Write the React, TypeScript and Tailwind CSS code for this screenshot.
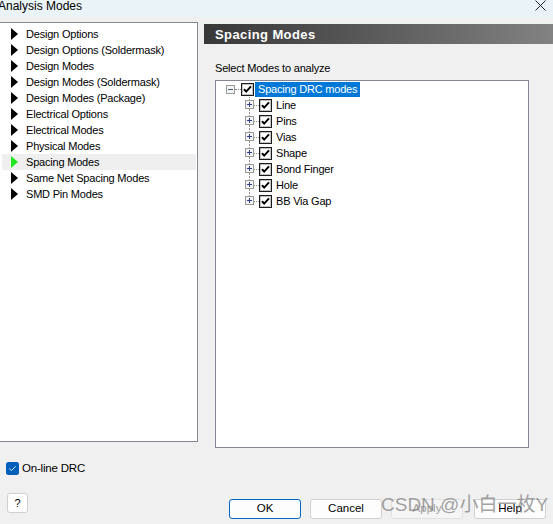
import React from "react";

const FONT = { fontFamily: '"Liberation Sans", Arial, sans-serif' };

const LEFT_ITEMS = [
  "Design Options",
  "Design Options (Soldermask)",
  "Design Modes",
  "Design Modes (Soldermask)",
  "Design Modes (Package)",
  "Electrical Options",
  "Electrical Modes",
  "Physical Modes",
  "Spacing Modes",
  "Same Net Spacing Modes",
  "SMD Pin Modes",
];

const CHILDREN = ["Line", "Pins", "Vias", "Shape", "Bond Finger", "Hole", "BB Via Gap"];

function Triangle({ green }: { green?: boolean }) {
  return (
    <svg width="7" height="12" viewBox="0 0 7 12" className="shrink-0">
      <path d="M0 0 L7 6 L0 12 Z" fill={green ? "#22e622" : "#000"} />
    </svg>
  );
}

function ClassicCheck() {
  return (
    <svg width="13" height="13" viewBox="0 0 13 13" className="shrink-0">
      <rect x="0.5" y="0.5" width="12" height="12" fill="#fff" stroke="#1a1a1a" />
      <rect x="1.5" y="1.5" width="10" height="10" fill="none" stroke="#9a9a9a" strokeWidth="0.6" />
      <path d="M3 6.2 L5.2 8.6 L10 3.4" fill="none" stroke="#000" strokeWidth="2" />
    </svg>
  );
}

function ExpandBox({ minus }: { minus?: boolean }) {
  return (
    <svg width="9" height="9" viewBox="0 0 9 9" className="shrink-0">
      <rect x="0.5" y="0.5" width="8" height="8" fill="#f4f4f4" stroke="#9a9a9a" />
      <path d="M2 4.5 H7" stroke={minus ? "#4a5a7a" : "#2c3f95"} strokeWidth="1" />
      {!minus && <path d="M4.5 2 V7" stroke="#2c3f95" strokeWidth="1" />}
    </svg>
  );
}

export default function App() {
  return (
    <div className="w-[553px] h-[524px] bg-[#f0f0f0] overflow-hidden relative text-black" style={FONT}>
      {/* Title bar */}
      <div className="h-[17px] bg-[#eaf3f8] flex items-center justify-between">
        <span className="text-[12px] leading-none -ml-[2px] -mt-[6px] whitespace-nowrap">Analysis Modes</span>
        <svg width="11" height="11" viewBox="0 0 11 11" className="mr-[7px] -mt-[6px]">
          <path d="M0.5 0.5 L10.5 10.5 M10.5 0.5 L0.5 10.5" stroke="#222" strokeWidth="1" />
        </svg>
      </div>

      <div className="flex pt-[5px]">
        {/* Left column */}
        <div className="w-[198px] shrink-0 flex flex-col">
          <div className="h-[420px] bg-white border border-[#828790] -ml-px pt-[3px] pl-[2px] pr-[1px]">
            {LEFT_ITEMS.map((t) => {
              const sel = t === "Spacing Modes";
              return (
                <div
                  key={t}
                  className={`h-[16px] flex items-center pl-[9px] gap-[8px] text-[11px] tracking-[-0.2px] ${sel ? "bg-[#efefef]" : ""}`}
                >
                  <Triangle green={sel} />
                  <span className="whitespace-nowrap">{t}</span>
                </div>
              );
            })}
          </div>

          <div className="mt-[20px] h-[13px] flex items-center ml-[6px] gap-[3px]">
            <svg width="13" height="13" viewBox="0 0 13 13" className="shrink-0">
              <rect x="0" y="0" width="13" height="13" rx="2.5" fill="#005fb8" />
              <path d="M3.3 6.6 L5.4 8.6 L9.7 4.3" fill="none" stroke="#dfe9f5" strokeWidth="1" />
            </svg>
            <span className="text-[11.5px] tracking-[-0.2px] leading-none">On-line DRC</span>
          </div>

          <button className="mt-[18px] ml-[7px] w-[21px] h-[20px] bg-white border border-[#d0d0d0] rounded-[3px] flex items-center justify-center text-[11px] leading-none">
            ?
          </button>
        </div>

        {/* Right column */}
        <div className="ml-[6px] flex-1 flex flex-col">
          <div className="mt-[2px] h-[20px] bg-gradient-to-r from-[#383838] to-[#828282] flex items-center pl-[11px]">
            <span className="text-white font-bold text-[13px] tracking-[0.4px] leading-none">Spacing Modes</span>
          </div>

          <div className="ml-[11px] mt-[17px] h-[14px] flex items-center text-[11px] tracking-[-0.2px]">
            Select Modes to analyze
          </div>

          <div className="ml-[11px] mt-[5px] w-[314px] h-[368px] bg-white border border-[#828790] text-[11px] tracking-[-0.2px]">
            <div className="h-[16px] flex items-center pl-[10px]">
              <ExpandBox minus />
              <div className="w-[6px] border-t border-dotted border-[#8a8a8a]" />
              <ClassicCheck />
              <span className="ml-[1px] bg-[#0078d7] text-white px-[3px] h-[15px] flex items-center whitespace-nowrap">
                Spacing DRC modes
              </span>
            </div>
            {CHILDREN.map((c, i) => (
              <div key={c} className="h-[16px] flex items-center pl-[29px]">
                <div className="w-[9px] h-[16px] flex flex-col items-center shrink-0">
                  <div className="h-[3px] border-l border-dotted border-[#8a8a8a]" />
                  <ExpandBox />
                  <div
                    className={`h-[4px] border-l border-dotted ${i === CHILDREN.length - 1 ? "border-transparent" : "border-[#8a8a8a]"}`}
                  />
                </div>
                <div className="w-[5px] border-t border-dotted border-[#8a8a8a]" />
                <ClassicCheck />
                <span className="ml-[4px] whitespace-nowrap">{c}</span>
              </div>
            ))}
          </div>

          <div className="mt-[51px] pl-[25px] flex text-[11.5px]">
            <button className="w-[72px] h-[20px] bg-[#fdfdfd] border border-[#0067c0] rounded-[3px] flex items-center justify-center">
              OK
            </button>
            <button className="ml-[9px] w-[72px] h-[20px] bg-[#fdfdfd] border border-[#d0d0d0] rounded-[3px] flex items-center justify-center">
              Cancel
            </button>
            <button className="ml-[9px] w-[72px] h-[20px] bg-[#f5f5f5] border border-[#e0e0e0] rounded-[3px] flex items-center justify-center text-[#a0a0a0]">
              Apply
            </button>
            <button className="ml-[11px] w-[72px] h-[20px] bg-[#fdfdfd] border border-[#d0d0d0] rounded-[3px] flex items-center justify-center">
              Help
            </button>
          </div>
        </div>
      </div>

      {/* Watermark */}
      <div
        className="absolute left-[381px] top-[495px] text-[19px] leading-none text-[#7a7a7a]/70 whitespace-nowrap pointer-events-none"
        style={{ fontFamily: '"Liberation Sans", "Noto Sans CJK SC", sans-serif' }}
      >
        CSDN @小白一枚Y
      </div>
    </div>
  );
}
